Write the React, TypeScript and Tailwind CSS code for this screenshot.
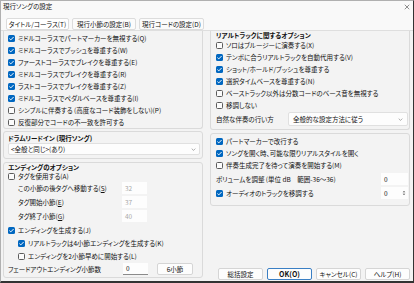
import React from "react";

const Check = ({ checked }: { checked?: boolean }) =>
  checked ? (
    <span className="w-[7px] h-[7px] rounded-[1.5px] bg-[#0067c0] flex items-center justify-center shrink-0">
      <svg viewBox="0 0 8 8" className="w-[7px] h-[7px]">
        <path d="M1.6 4.1 L3.2 5.6 L6.4 2.3" stroke="white" strokeWidth="1.1" fill="none" />
      </svg>
    </span>
  ) : (
    <span className="w-[7px] h-[7px] rounded-[1.5px] border border-[#5c5c5c] bg-[#fbfbfb] shrink-0" />
  );

const Row = ({ checked, children, h = "h-[12px]" }: { checked?: boolean; children: React.ReactNode; h?: string }) => (
  <div className={`flex items-center gap-[3px] ${h}`}>
    <Check checked={checked} />
    <span className="whitespace-nowrap">{children}</span>
  </div>
);

const Chevron = () => (
  <svg viewBox="0 0 8 5" className="w-[5px] h-[3px]">
    <path d="M1 1 L4 4 L7 1" stroke="#777" strokeWidth="1" fill="none" />
  </svg>
);

const NumBox = ({ v, disabled }: { v: string; disabled?: boolean }) => (
  <div
    className={`w-[25px] h-[12px] bg-[#fdfdfd] flex items-center pl-[3px] shrink-0 ${
      disabled ? "text-[#a8a8a8]" : "border-b border-[#8a8a8a] text-[#111]"
    }`}
  >
    {v}
  </div>
);

const Btn = ({ children, primary }: { children: React.ReactNode; primary?: boolean }) => (
  <div
    className={`h-[12px] w-[45px] rounded-[2px] flex items-center justify-center bg-[#fdfdfd] whitespace-nowrap ${
      primary ? "border border-[#3a7fc4] font-bold text-[7px]" : "border border-[#d5d5d5]"
    }`}
  >
    {children}
  </div>
);

export default function App() {
  return (
    <div
      className="w-[414px] h-[283px] bg-[#f3f3f3] flex flex-col text-[6.5px] leading-none text-[#111] border-l border-t border-[#b0b0b0] border-r border-r-[#333] border-b-2 border-b-[#333] overflow-hidden"
      style={{ fontFamily: '"Noto Sans CJK JP", "Noto Sans", sans-serif', fontFeatureSettings: '"palt"' }}
    >
      {/* title bar */}
      <div className="h-[11px] bg-[#f9f9f9] flex items-center justify-between pl-[2px] pr-[3px] shrink-0">
        <span>現行ソングの設定</span>
        <svg viewBox="0 0 8 8" className="w-[6px] h-[6px]">
          <path d="M1 1 L7 7 M7 1 L1 7" stroke="#444" strokeWidth="0.8" />
        </svg>
      </div>
      {/* tabs */}
      <div className="h-[19px] bg-[#f9f9f9] flex items-start gap-[3px] pl-[5px] pt-[6px] shrink-0 border-b border-[#dedede]">
        <div className="h-[12px] w-[63px] whitespace-nowrap flex items-center justify-center bg-white border border-[#dcdcdc] rounded-[2px]">
          タイトル/コーラス(T)
        </div>
        <div className="h-[12px] w-[64px] whitespace-nowrap flex items-center justify-center bg-[#fbfbfb] border border-[#dcdcdc] rounded-[2px]">
          現行小節の設定(B)
        </div>
        <div className="h-[12px] w-[65px] whitespace-nowrap flex items-center justify-center bg-[#fbfbfb] border border-[#dcdcdc] rounded-[2px]">
          現行コードの設定(D)
        </div>
      </div>
      {/* content */}
      <div className="flex flex-1 min-h-0 pl-[2px] gap-[7px] pr-[3px]">
        {/* left column */}
        <div className="w-[200px] flex flex-col">
          <div className="pl-[4px] pt-[1px] border-l border-r border-b border-[#dadada] rounded-b-[3px]">
            <Row checked>ミドルコーラスでパートマーカーを無視する(Q)</Row>
            <Row checked>ミドルコーラスでプッシュを尊重する(W)</Row>
            <Row checked>ファーストコーラスでブレイクを尊重する(E)</Row>
            <Row checked>ミドルコーラスでブレイクを尊重する(R)</Row>
            <Row checked>ラストコーラスでブレイクを尊重する(Z)</Row>
            <Row checked>ミドルコーラスでペダルベースを尊重する(I)</Row>
            <Row>シンプルに伴奏する (高度なコード装飾をしない)(P)</Row>
            <Row>反復部分でコードの不一致を許可する</Row>
          </div>
          <div className="mt-[2px] border border-[#dadada] rounded-[3px] pl-[4px] pr-[2px] pt-[1px] pb-[3px]">
            <div className="h-[10px] flex items-center font-semibold">ドラムリードイン (現行ソング)</div>
            <div className="h-[12px] bg-[#fdfdfd] border border-[#e0e0e0] rounded-[2px] flex items-center justify-between pl-[2px] pr-[3px]">
              <span>&lt;全般と同じ&gt;(あり)</span>
              <Chevron />
            </div>
          </div>
          <div className="mt-[3px] border border-[#dadada] rounded-[3px] pl-[4px] pb-[1px]">
            <div className="h-[8px] flex items-center font-semibold">エンディングのオプション</div>
            <Row h="h-[10px]">タグを使用する(A)</Row>
            <div className="h-[14px] flex items-center">
              <span className="w-[114px] pl-[10px] whitespace-nowrap">
                この小節の後タグへ移動する(<u>S</u>)
              </span>
              <NumBox v="32" disabled />
            </div>
            <div className="h-[14px] flex items-center">
              <span className="w-[114px] pl-[10px] whitespace-nowrap">
                タグ開始小節(<u>E</u>)
              </span>
              <NumBox v="37" disabled />
            </div>
            <div className="h-[14px] flex items-center">
              <span className="w-[114px] pl-[10px] whitespace-nowrap">
                タグ終了小節(<u>G</u>)
              </span>
              <NumBox v="40" disabled />
            </div>
            <Row checked h="h-[14px]">エンディングを生成する(J)</Row>
            <div className="pl-[10px]">
              <Row checked h="h-[13px]">リアルトラックは4小節エンディングを生成する(K)</Row>
              <Row h="h-[12px]">エンディングを2小節早めに開始する(L)</Row>
            </div>
            <div className="h-[14px] flex items-center">
              <span className="w-[115px] whitespace-nowrap">フェードアウトエンディング小節数</span>
              <NumBox v="0" />
              <div className="ml-[9px] h-[12px] w-[36px] bg-[#fdfdfd] border border-[#d5d5d5] rounded-[2px] flex items-center justify-center">
                6小節
              </div>
            </div>
          </div>
        </div>
        {/* right column */}
        <div className="flex-1 flex flex-col">
          <div className="border-l border-r border-b border-[#dadada] rounded-b-[3px] pl-[5px] pr-[1px] pb-[3px]">
            <div className="h-[8px] flex items-center font-semibold">リアルトラックに関するオプション</div>
            <Row>ソロはブルージーに演奏する(X)</Row>
            <Row checked>テンポに合うリアルトラックを自動代用する(V)</Row>
            <Row checked>ショット/ホールド/プッシュを尊重する</Row>
            <Row checked>選択タイムベースを尊重する(N)</Row>
            <Row>ベーストラック以外は分数コードのベース音を無視する</Row>
            <Row>移調しない</Row>
            <div className="h-[14px] mt-[1px] flex items-center">
              <span className="w-[72px] whitespace-nowrap">自然な伴奏の行い方</span>
              <div className="flex-1 h-[14px] bg-[#fdfdfd] border border-[#e0e0e0] rounded-[2px] flex items-center justify-between pl-[4px] pr-[4px]">
                <span>全般的な設定方法に従う</span>
                <Chevron />
              </div>
            </div>
          </div>
          <div className="mt-[3px] border border-[#dadada] rounded-[3px] pl-[5px] pr-[1px] pt-[1px] pb-[5px]">
            <Row checked>パートマーカーで改行する</Row>
            <Row checked>ソングを開く時、可能な限りリアルスタイルを開く</Row>
            <Row h="h-[13px]">伴奏生成完了を待って演奏を開始する(M)</Row>
            <div className="h-[14px] flex items-center justify-between">
              <span className="whitespace-nowrap">ボリュームを調整 (単位 dB　範囲-36〜36)</span>
              <div className="w-[27px] h-[12px] bg-[#fdfdfd] flex items-center pl-[3px]">0</div>
            </div>
            <div className="h-[14px] flex items-center justify-between">
              <Row checked>オーディオのトラックを移調する</Row>
              <div className="w-[27px] h-[12px] bg-[#fdfdfd] flex items-center justify-between pl-[3px] pr-[2px]">
                <span>0</span>
                <svg viewBox="0 0 6 8" className="w-[4px] h-[6px]">
                  <path d="M1 3 L3 1 L5 3 Z M1 5 L3 7 L5 5 Z" fill="#444" />
                </svg>
              </div>
            </div>
          </div>
          <div className="flex-1" />
          <div className="flex justify-end gap-[4px] mb-[1px]">
            <Btn>総括設定</Btn>
            <Btn primary>OK(O)</Btn>
            <Btn>キャンセル(C)</Btn>
            <Btn>ヘルプ(H)</Btn>
          </div>
        </div>
      </div>
    </div>
  );
}
